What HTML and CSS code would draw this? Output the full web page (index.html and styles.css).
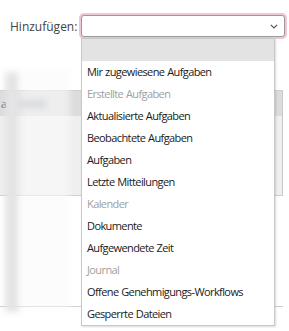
FILE: index.html
```
<!DOCTYPE html>
<html lang="de">
<head>
<meta charset="utf-8">
<link rel="stylesheet" href="styles.css">
</head>
<body>
<div class="page">
  <div class="addrow">
    <label class="addlabel">Hinzufügen:</label>
    <div class="selectbox">
      <svg class="chev" width="8" height="5" viewBox="0 0 8 5"><path d="M0.8 0.8 L4 4 L7.2 0.8" fill="none" stroke="#555" stroke-width="1.2"/></svg>
    </div>
  </div>
  <div class="table">
    <div class="thead"><span class="th-a">a</span></div>
    <div class="tbody"></div>
    <div class="tfoot"></div>
  </div>
  <div class="blur blur1"></div>
  <div class="blur blur2"></div>
  <div class="blur blur3"></div>
  <ul class="menu">
    <li class="opt blank"></li>
    <li class="opt">Mir zugewiesene Aufgaben</li>
    <li class="opt dis">Erstellte Aufgaben</li>
    <li class="opt">Aktualisierte Aufgaben</li>
    <li class="opt">Beobachtete Aufgaben</li>
    <li class="opt">Aufgaben</li>
    <li class="opt">Letzte Mitteilungen</li>
    <li class="opt dis">Kalender</li>
    <li class="opt">Dokumente</li>
    <li class="opt">Aufgewendete Zeit</li>
    <li class="opt dis">Journal</li>
    <li class="opt">Offene Genehmigungs-Workflows</li>
    <li class="opt">Gesperrte Dateien</li>
  </ul>
</div>
</body>
</html>
```
FILE: styles.css
```
html, body { margin: 0; padding: 0; background: #fff; }
body { font-family: "Open Sans", "Noto Sans", sans-serif; font-size: 11px; color: #222; }
.page { position: relative; width: 289px; height: 331px; overflow: hidden; }
.addrow { display: flex; align-items: center; padding: 14px 4px 0 10px; height: 24px; }
.addlabel { color: #444; font-size: 12px; width: 71px; letter-spacing: 0; }
.selectbox { flex: 1; height: 20px; border: 1px solid #9a9a9a; border-radius: 3px; box-shadow: 0 0 0 2px #f0c6cf; position: relative; background: #fff; }
.chev { position: absolute; right: 6px; top: 8px; }
.table { margin-top: 52px; margin-right: 6px; }
.thead { height: 25px; background: #dcdcdc; border-right: 1px solid #c9c9c9; border-top: 1px solid #cfcfcf; }
.th-a { display: block; padding-top: 6px; color: #3e4a80; font-size: 10px; padding-left: 1px; }
.tbody { height: 79px; background: #efefef; border-right: 1px solid #c9c9c9; border-bottom: 1px solid #cfcfcf; }
.tfoot { height: 110px; border-bottom: 1px solid #cfcfcf; }
.blur { position: absolute; filter: blur(3px); }
.blur1 { left: 5px; top: 72px; width: 14px; height: 240px; background: #e4e4e4; }
.blur2 { left: 22px; top: 100px; width: 24px; height: 8px; background: #a8acb8; }
.blur3 { left: 20px; top: 70px; width: 50px; height: 240px; background: rgba(250,250,250,0.6); }
.menu { position: absolute; left: 81px; top: 38px; width: 192px; margin: 0; padding: 0; list-style: none; background: #fff; border: 1px solid #c8c8c8; box-shadow: 1px 1px 2px rgba(0,0,0,0.15); }
.opt { height: 22px; line-height: 22px; padding-left: 5px; white-space: nowrap; letter-spacing: -0.6px; word-spacing: 0.5px; color: #1a1a1a; }
.opt.blank { background: #e3e3e3; }
.opt.dis { color: #a0a0a0; }
```
